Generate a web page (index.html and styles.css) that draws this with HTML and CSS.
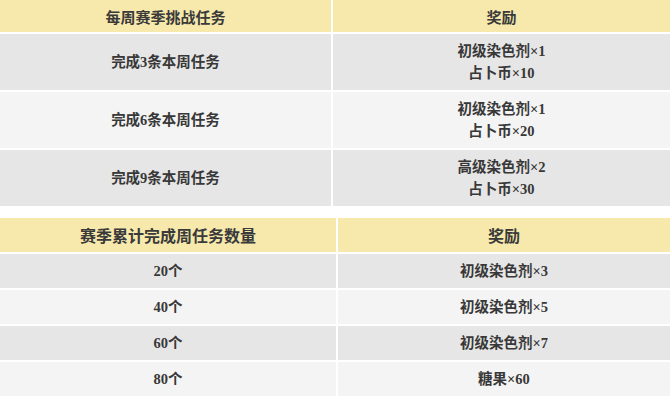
FILE: index.html
```html
<!DOCTYPE html>
<html>
<head>
<meta charset="utf-8">
<link rel="stylesheet" href="styles.css">
</head>
<body>
<table class="tbl tbl-weekly">
  <colgroup><col class="c1"><col class="c2"></colgroup>
  <thead>
    <tr><th>每周赛季挑战任务</th><th>奖励</th></tr>
  </thead>
  <tbody>
    <tr class="dark"><td>完成3条本周任务</td><td>初级染色剂×1<br>占卜币×10</td></tr>
    <tr class="light"><td>完成6条本周任务</td><td>初级染色剂×1<br>占卜币×20</td></tr>
    <tr class="dark"><td>完成9条本周任务</td><td>高级染色剂×2<br>占卜币×30</td></tr>
  </tbody>
</table>
<table class="tbl tbl-season">
  <colgroup><col class="c1"><col class="c2"></colgroup>
  <thead>
    <tr><th>赛季累计完成周任务数量</th><th>奖励</th></tr>
  </thead>
  <tbody>
    <tr class="dark"><td>20个</td><td>初级染色剂×3</td></tr>
    <tr class="light"><td>40个</td><td>初级染色剂×5</td></tr>
    <tr class="dark"><td>60个</td><td>初级染色剂×7</td></tr>
    <tr class="light"><td>80个</td><td>糖果×60</td></tr>
  </tbody>
</table>
</body>
</html>
```
FILE: styles.css
```css
html, body {
  margin: 0;
  padding: 0;
  background: #fff;
}
body {
  font-family: "Liberation Serif", "Noto Sans CJK SC", serif;
  color: #383838;
  font-weight: bold;
}
.tbl {
  width: 670px;
  table-layout: fixed;
  border-collapse: separate;
  border-spacing: 0;
}
.tbl th, .tbl td {
  padding: 0;
  text-align: center;
  vertical-align: middle;
  border-bottom: 2px solid #fff;
}
.tbl th:first-child, .tbl td:first-child {
  border-right: 2px solid #fff;
}
.tbl th {
  background: #f6e9ab;
  font-size: 15px;
  color: #3a3a3a;
}
.tbl td {
  font-size: 14.5px;
  line-height: 22px;
}
.dark td { background: #e6e6e6; }
.light td { background: #f4f4f4; }

.tbl-weekly .c1 { width: 333px; }
.tbl-weekly .c2 { width: 337px; }
.tbl-weekly th { height: 32px; }
.tbl-weekly td { height: 56px; }

.tbl-season { margin-top: 10px; }
.tbl-season .c1 { width: 338px; }
.tbl-season .c2 { width: 332px; }
.tbl-season th { height: 34px; font-size: 16px; }
.tbl-season td { height: 34px; }
```
